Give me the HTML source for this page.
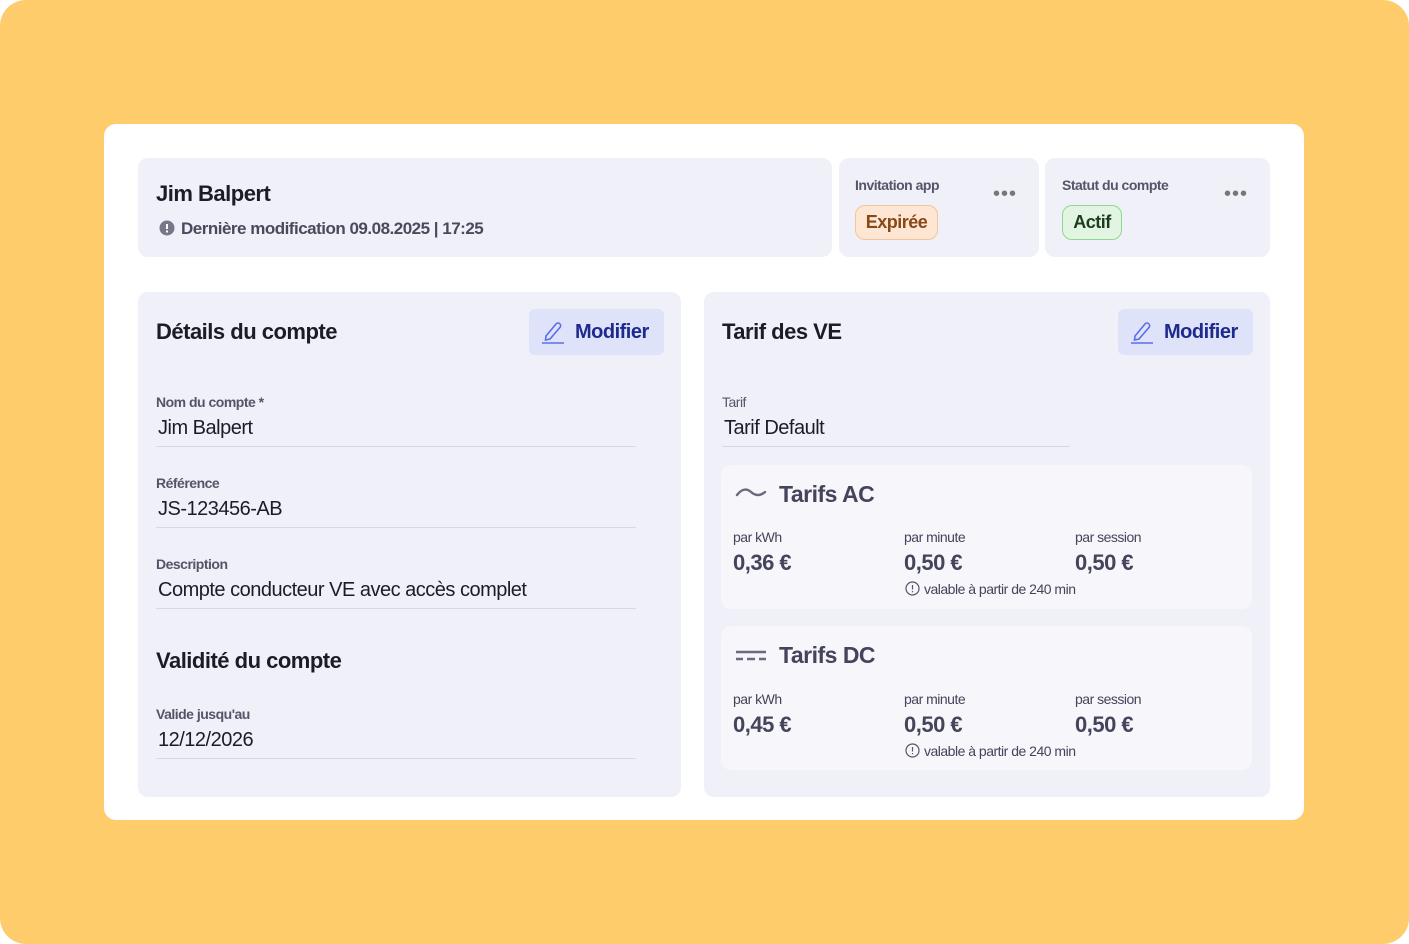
<!DOCTYPE html>
<html><head><meta charset="utf-8"><style>
*{margin:0;padding:0;box-sizing:border-box}
html,body{width:1409px;height:944px;background:#fff;overflow:hidden}
body{font-family:"Liberation Sans",sans-serif;position:relative;color:#1c1c24;letter-spacing:-0.5px}
.bg{position:absolute;left:0;top:0;width:1409px;height:944px;background:#FFCC6B;border-radius:26px}
.a{position:absolute}
.card{position:absolute;left:104px;top:124px;width:1200px;height:696px;background:#fff;border-radius:12px}
.p{position:absolute;background:#EFF0F8;border-radius:10px}
.s{position:absolute;background:#F6F6FB;border-radius:10px}
.h1{font-size:22px;font-weight:bold}
.lbl{font-size:14px;font-weight:bold;color:#55556a}
.val{font-size:20px;color:#1c1c24}
.line{position:absolute;height:1px;background:#d6d8e6}
.btn{position:absolute;background:#DEE3FA;border-radius:6px;height:46px;color:#1e2a8c;font-weight:bold;font-size:20px}
.small{font-size:14px;color:#44445a}
.price{font-size:22px;font-weight:bold;color:#44445a}
.dots{font-size:20px;color:#777;letter-spacing:1px}
</style></head><body>
<div class="bg"></div>
<div class="card"></div>

<div class="p" style="left:138px;top:158px;width:694px;height:99px"></div>
<div class="a h1" style="left:156px;top:181px">Jim Balpert</div>
<svg class="a" style="left:159px;top:220px" width="16" height="16"><circle cx="8" cy="8" r="7.5" fill="#77778a"/><rect x="7" y="4" width="2" height="5" fill="#fff"/><rect x="7" y="10.5" width="2" height="2" fill="#fff"/></svg>
<div class="a" style="left:181px;top:219px;font-size:17px;font-weight:bold;color:#4a4a5c">Dernière modification 09.08.2025 | 17:25</div>

<div class="p" style="left:839px;top:158px;width:200px;height:99px"></div>
<div class="a lbl" style="left:855px;top:177px">Invitation app</div>
<div class="a dots" style="left:993px;top:183px">•••</div>
<div class="a" style="left:855px;top:205px;width:83px;height:35px;border:1.5px solid #f7c49a;background:#fde6d4;border-radius:10px;color:#8a4816;font-weight:bold;font-size:18px;text-align:center;line-height:33px">Expirée</div>

<div class="p" style="left:1045px;top:158px;width:225px;height:99px"></div>
<div class="a lbl" style="left:1062px;top:177px">Statut du compte</div>
<div class="a dots" style="left:1224px;top:183px">•••</div>
<div class="a" style="left:1062px;top:205px;width:60px;height:35px;border:1.5px solid #8fd88f;background:#e2f5e2;border-radius:10px;color:#1f3a1f;font-weight:bold;font-size:18px;text-align:center;line-height:33px">Actif</div>

<!-- left panel -->
<div class="p" style="left:138px;top:292px;width:543px;height:505px"></div>
<div class="a h1" style="left:156px;top:319px">Détails du compte</div>
<div class="btn" style="left:529px;top:309px;width:135px"><svg class="a" style="left:12px;top:11px" width="24" height="24" fill="none" stroke="#5b6ee8" stroke-width="1.6"><path d="M5 16 L15 4 a2.5 2.5 0 0 1 4 3.4 L9 19 L4.5 20 Z"/><path d="M1 23 H23"/></svg><span class="a" style="left:46px;top:12px">Modifier</span></div>

<div class="a lbl" style="left:156px;top:394px">Nom du compte *</div>
<div class="a val" style="left:158px;top:417px">Jim Balpert</div>
<div class="line" style="left:156px;top:446px;width:480px"></div>
<div class="a lbl" style="left:156px;top:475px">Référence</div>
<div class="a val" style="left:158px;top:498px">JS-123456-AB</div>
<div class="line" style="left:156px;top:527px;width:480px"></div>
<div class="a lbl" style="left:156px;top:556px">Description</div>
<div class="a val" style="left:158px;top:579px">Compte conducteur VE avec accès complet</div>
<div class="line" style="left:156px;top:608px;width:480px"></div>
<div class="a h1" style="left:156px;top:648px">Validité du compte</div>
<div class="a lbl" style="left:156px;top:706px">Valide jusqu'au</div>
<div class="a val" style="left:158px;top:729px">12/12/2026</div>
<div class="line" style="left:156px;top:758px;width:480px"></div>

<!-- right panel -->
<div class="p" style="left:704px;top:292px;width:566px;height:505px"></div>
<div class="a h1" style="left:722px;top:319px">Tarif des VE</div>
<div class="btn" style="left:1118px;top:309px;width:135px"><svg class="a" style="left:12px;top:11px" width="24" height="24" fill="none" stroke="#5b6ee8" stroke-width="1.6"><path d="M5 16 L15 4 a2.5 2.5 0 0 1 4 3.4 L9 19 L4.5 20 Z"/><path d="M1 23 H23"/></svg><span class="a" style="left:46px;top:12px">Modifier</span></div>
<div class="a" style="left:722px;top:394px;font-size:14px;color:#55556a">Tarif</div>
<div class="a val" style="left:724px;top:417px">Tarif Default</div>
<div class="line" style="left:722px;top:446px;width:348px"></div>

<div class="s" style="left:721px;top:465px;width:531px;height:144px"></div>
<svg class="a" style="left:735px;top:486px" width="32" height="14" fill="none" stroke="#6a6a7c" stroke-width="2.4" stroke-linecap="round"><path d="M2 9 Q9 0 16 6 T30 6"/></svg>
<div class="a" style="left:779px;top:481px;font-size:23px;font-weight:bold;color:#44445a">Tarifs AC</div>
<div class="a small" style="left:733px;top:529px">par kWh</div>
<div class="a small" style="left:904px;top:529px">par minute</div>
<div class="a small" style="left:1075px;top:529px">par session</div>
<div class="a price" style="left:733px;top:550px">0,36 €</div>
<div class="a price" style="left:904px;top:550px">0,50 €</div>
<div class="a price" style="left:1075px;top:550px">0,50 €</div>
<svg class="a" style="left:905px;top:581px" width="15" height="15" fill="none" stroke="#55556a" stroke-width="1.2"><circle cx="7.5" cy="7.5" r="6.5"/><path d="M7.5 4v4.5M7.5 10v1.2"/></svg>
<div class="a small" style="left:924px;top:581px">valable à partir de 240 min</div>

<div class="s" style="left:721px;top:626px;width:531px;height:144px"></div>
<svg class="a" style="left:735px;top:649px" width="32" height="14" stroke="#6a6a7c" stroke-width="2.4"><path d="M1 3H31"/><path d="M1 10H8M12 10H20M24 10H31"/></svg>
<div class="a" style="left:779px;top:642px;font-size:23px;font-weight:bold;color:#44445a">Tarifs DC</div>
<div class="a small" style="left:733px;top:691px">par kWh</div>
<div class="a small" style="left:904px;top:691px">par minute</div>
<div class="a small" style="left:1075px;top:691px">par session</div>
<div class="a price" style="left:733px;top:712px">0,45 €</div>
<div class="a price" style="left:904px;top:712px">0,50 €</div>
<div class="a price" style="left:1075px;top:712px">0,50 €</div>
<svg class="a" style="left:905px;top:743px" width="15" height="15" fill="none" stroke="#55556a" stroke-width="1.2"><circle cx="7.5" cy="7.5" r="6.5"/><path d="M7.5 4v4.5M7.5 10v1.2"/></svg>
<div class="a small" style="left:924px;top:743px">valable à partir de 240 min</div>
</body></html>
